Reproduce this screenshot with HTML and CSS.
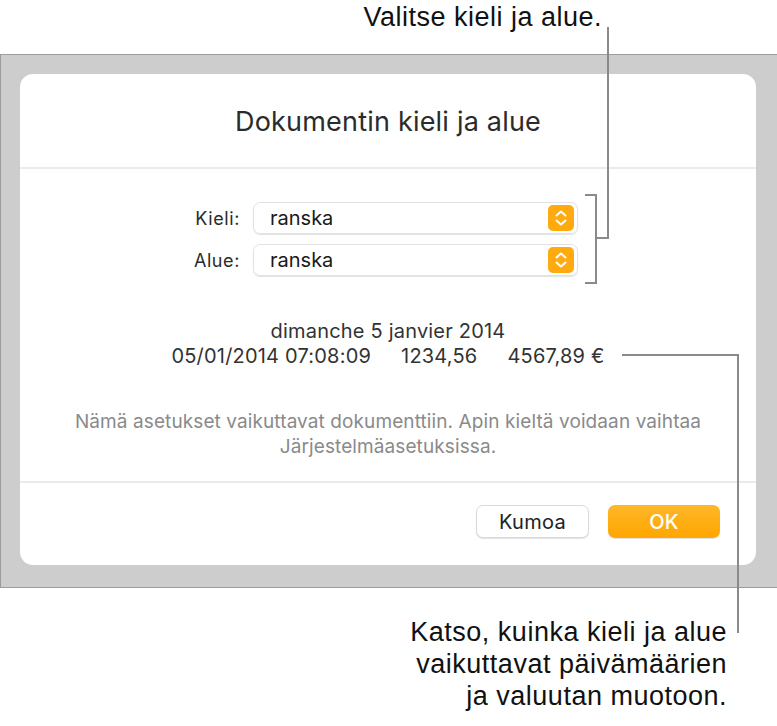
FILE: index.html
```html
<!DOCTYPE html>
<html lang="fi">
  <head>
    <meta charset="UTF-8" />
    <meta name="viewport" content="width=device-width, initial-scale=1.0" />
    <title>Dokumentin kieli ja alue</title>
    <link rel="stylesheet" href="styles.css">
  </head>
  <body>
    <div class="page">
      <div class="callout-top">Valitse kieli ja alue.</div>

      <div class="frame">
        <div class="dialog">
          <div class="dlg-head">
            <h1>Dokumentin kieli ja alue</h1>
          </div>

          <div class="dlg-body">
            <div class="fields">
              <div class="field">
                <label for="lang">Kieli:</label>
                <div class="popup" id="lang">
                  <span>ranska</span>
                  <svg class="stepper" width="26" height="26" viewBox="0 0 26 26">
                    <rect width="26" height="26" rx="5" fill="#ffab0f"/>
                    <path d="M8.5 10.5 L13 6.5 L17.5 10.5 M8.5 15.5 L13 19.5 L17.5 15.5" fill="none" stroke="#fff" stroke-width="2" stroke-linecap="round" stroke-linejoin="round"/>
                  </svg>
                </div>
              </div>
              <div class="field">
                <label for="region">Alue:</label>
                <div class="popup" id="region">
                  <span>ranska</span>
                  <svg class="stepper" width="26" height="26" viewBox="0 0 26 26">
                    <rect width="26" height="26" rx="5" fill="#ffab0f"/>
                    <path d="M8.5 10.5 L13 6.5 L17.5 10.5 M8.5 15.5 L13 19.5 L17.5 15.5" fill="none" stroke="#fff" stroke-width="2" stroke-linecap="round" stroke-linejoin="round"/>
                  </svg>
                </div>
              </div>
            </div>

            <div class="sample">
              <p>dimanche 5 janvier 2014</p>
              <p class="sample-row"><span>05/01/2014 07:08:09</span><span>1234,56</span><span>4567,89 €</span></p>
            </div>

            <p class="note">Nämä asetukset vaikuttavat dokumenttiin. Apin kieltä voidaan vaihtaa<br>Järjestelmäasetuksissa.</p>
          </div>

          <div class="dlg-foot">
            <button class="btn">Kumoa</button>
            <button class="btn btn-ok">OK</button>
          </div>
        </div>
      </div>

      <div class="callout-bottom">Katso, kuinka kieli ja alue<br>vaikuttavat päivämäärien<br>ja valuutan muotoon.</div>

      <!-- leader lines -->
      <div class="line top-v"></div>
      <div class="line top-h"></div>
      <div class="line bracket-v"></div>
      <div class="line bracket-t"></div>
      <div class="line bracket-b"></div>
      <div class="line bot-h"></div>
      <div class="line bot-v"></div>
    </div>
  </body>
</html>
```

FILE: styles.css
```css
body {
  margin: 0;
  background: #fff;
  font-family: Inter, "Liberation Sans", sans-serif;
  color: #111;
}
.page {
  position: relative;
  width: 777px;
  height: 726px;
  overflow: hidden;
}
.callout-top {
  height: 54px;
  line-height: 34px;
  font-family: "Liberation Sans", Arial, sans-serif;
  font-size: 27px;
  letter-spacing: 0.5px;
  text-align: right;
  padding-right: 175px;
  box-sizing: border-box;
}
.frame {
  width: 777px;
  height: 534px;
  box-sizing: border-box;
  border: 1px solid #9c9c9c;
  border-right: none;
  background: #cdcdcd;
  padding: 19px 0 0 19px;
}
.dialog {
  width: 736px;
  height: 491px;
  background: #fff;
  border-radius: 13px;
  display: flex;
  flex-direction: column;
}
.dlg-head {
  height: 93px;
  border-bottom: 2px solid #ebebeb;
  display: flex;
  align-items: center;
  justify-content: center;
}
.dlg-head h1 {
  margin: 0;
  padding-top: 2px;
  font-size: 27px;
  font-weight: 400;
  letter-spacing: 0.2px;
  color: #2b2b2b;
}
.dlg-body {
  flex: 1;
  border-bottom: 2px solid #ebebeb;
  display: flex;
  flex-direction: column;
  align-items: center;
}
.fields {
  align-self: flex-start;
  margin: 33px 0 0 140px;
  display: flex;
  flex-direction: column;
  gap: 10px;
}
.field {
  display: flex;
  align-items: center;
}
.field label {
  width: 80px;
  margin-right: 13px;
  text-align: right;
  font-size: 18px;
  letter-spacing: 0.6px;
  color: #2b2b2b;
}
.popup {
  width: 325px;
  height: 32px;
  box-sizing: border-box;
  border: 1px solid #e2e2e2;
  border-radius: 7px;
  box-shadow: 0 1px 1px rgba(0, 0, 0, 0.12);
  display: flex;
  align-items: center;
  justify-content: space-between;
  padding: 0 3px 0 16px;
  font-size: 20px;
  color: #1a1a1a;
}
.sample {
  margin-top: 43px;
  text-align: center;
  font-size: 20px;
  letter-spacing: 0.2px;
  color: #333;
}
.sample p {
  margin: 0;
  line-height: 25px;
}
.sample-row span + span {
  margin-left: 30px;
}
.note {
  margin: 40px 0 0;
  text-align: center;
  font-size: 19px;
  letter-spacing: 0.1px;
  line-height: 25px;
  color: #8a8a8a;
}
.dlg-foot {
  height: 82px;
  display: flex;
  justify-content: flex-end;
  align-items: flex-start;
  gap: 19px;
  padding: 22px 36px 0 0;
  box-sizing: border-box;
}
.btn {
  width: 113px;
  height: 33px;
  border: 1px solid #dadada;
  border-radius: 7px;
  background: #fff;
  box-shadow: 0 1px 1px rgba(0, 0, 0, 0.12);
  font-family: inherit;
  font-size: 20px;
  letter-spacing: 0.3px;
  color: #222;
}
.btn-ok {
  width: 112px;
  border: none;
  background: linear-gradient(to bottom, #ffb72a, #ffa600);
  color: #fff;
  font-weight: 500;
}
.callout-bottom {
  padding: 28px 50px 0 0;
  text-align: right;
  font-family: "Liberation Sans", Arial, sans-serif;
  font-size: 27px;
  letter-spacing: 0.5px;
  line-height: 32px;
}
.line {
  position: absolute;
  background: #8a8a8a;
}
.top-v {
  left: 607px;
  top: 27px;
  width: 2px;
  height: 212px;
}
.top-h {
  left: 595px;
  top: 237px;
  width: 14px;
  height: 2px;
}
.bracket-v {
  left: 595px;
  top: 194px;
  width: 2px;
  height: 90px;
}
.bracket-t {
  left: 585px;
  top: 194px;
  width: 12px;
  height: 2px;
}
.bracket-b {
  left: 585px;
  top: 282px;
  width: 12px;
  height: 2px;
}
.bot-h {
  left: 622px;
  top: 354px;
  width: 117px;
  height: 2px;
}
.bot-v {
  left: 737px;
  top: 354px;
  width: 2px;
  height: 279px;
}
```
